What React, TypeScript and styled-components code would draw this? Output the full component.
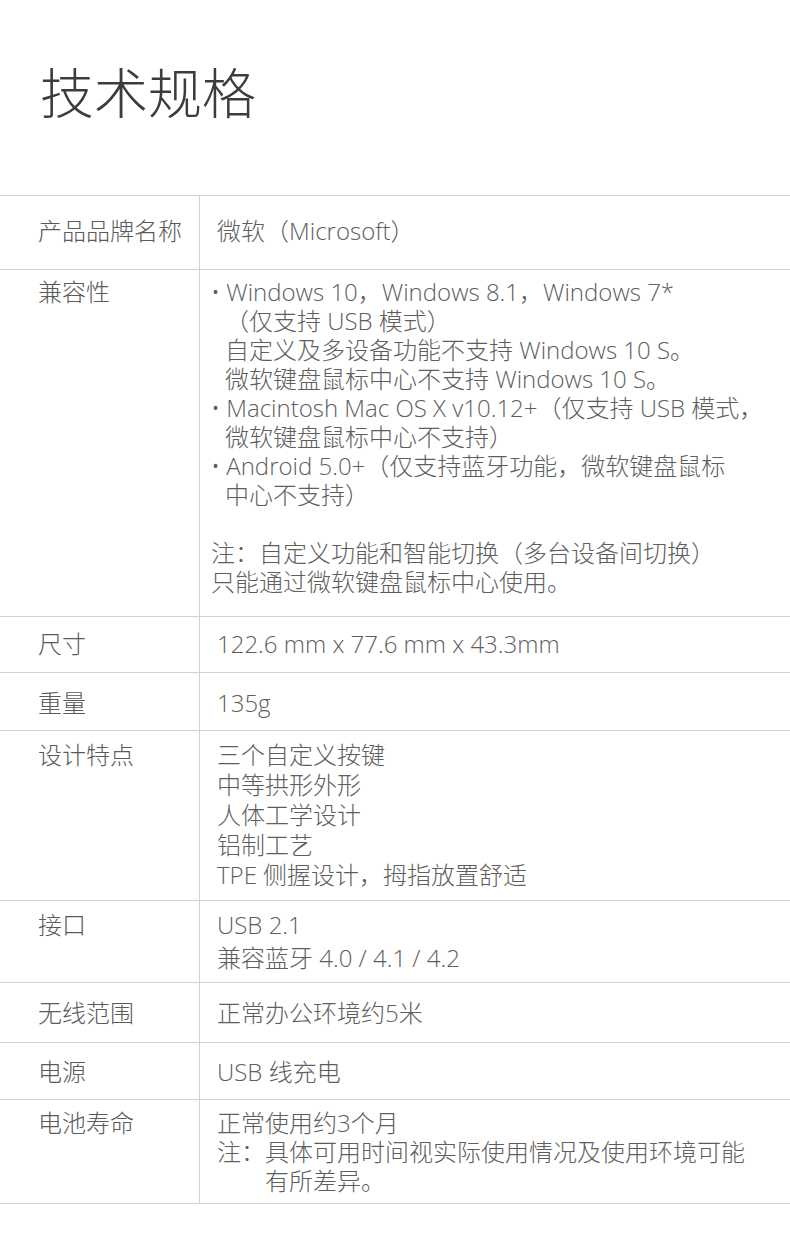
import React, { FC } from 'react';
import styled, { createGlobalStyle } from 'styled-components';

const GlobalStyle = createGlobalStyle`
  html, body {
    margin: 0;
    padding: 0;
    background: #ffffff;
  }
  body {
    font-family: "Open Sans", "Noto Sans CJK SC", sans-serif;
    font-weight: 300;
    color: #5e5e5e;
  }
`

const Page = styled.div`
  width: 790px;
  min-height: 1256px;
  background: #fff;
`

const Header = styled.header`
  height: 195px;
  box-sizing: border-box;
  padding: 58px 0 0 40px;
`

const Title = styled.h1`
  margin: 0;
  font-size: 54px;
  line-height: 70px;
  font-weight: 300;
  color: #3c3c3c;
`

const SpecTable = styled.div`
  border-top: 1px solid #d2d2d2;
  border-bottom: 1px solid #d2d2d2;
`

interface IRowStyled {
  $pt: number;
  $pb: number;
  $lh?: number;
}

const Row = styled.div<IRowStyled>`
  display: grid;
  grid-template-columns: 199px 1fr;
  font-size: 24px;
  line-height: ${p => p.$lh || 29}px;
  & + & {
    border-top: 1px solid #d2d2d2;
  }
  & > * {
    padding-top: ${p => p.$pt}px;
    padding-bottom: ${p => p.$pb}px;
  }
`

const Label = styled.div`
  padding-left: 38px;
  color: #5a5a5a;
`

const Value = styled.div<{ $shift?: number }>`
  border-left: 1px solid #d2d2d2;
  padding-left: ${p => 17 - (p.$shift || 0)}px;
  padding-right: 16px;
`

const Line = styled.div<{ $indent?: number }>`
  white-space: nowrap;
  padding-left: ${p => p.$indent || 0}px;
`

const NoteLine = styled.div`
  box-sizing: border-box;
  width: 530px;
  padding-left: 2em;
  text-indent: -2em;
`

const Gap = styled.div`
  height: 29px;
`

interface ISpec {
  label: string;
  pt: number;
  pb: number;
  lh?: number;
  shift?: number;
  lines: React.ReactNode;
}

const specs: ISpec[] = [
  { label: '产品品牌名称', pt: 20, pb: 24, lines: <Line>微软（Microsoft）</Line> },
  {
    label: '兼容性',
    pt: 7,
    pb: 20,
    shift: 6,
    lines: (
      <>
        <Line>• Windows 10，Windows 8.1，Windows 7*</Line>
        <Line $indent={14}>（仅支持 USB 模式）</Line>
        <Line $indent={14}>自定义及多设备功能不支持 Windows 10 S。</Line>
        <Line $indent={14}>微软键盘鼠标中心不支持 Windows 10 S。</Line>
        <Line>• Macintosh Mac OS X v10.12+（仅支持 USB 模式，</Line>
        <Line $indent={14}>微软键盘鼠标中心不支持）</Line>
        <Line>• Android 5.0+（仅支持蓝牙功能，微软键盘鼠标</Line>
        <Line $indent={14}>中心不支持）</Line>
        <Gap />
        <Line>注：自定义功能和智能切换（多台设备间切换）</Line>
        <Line>只能通过微软键盘鼠标中心使用。</Line>
      </>
    ),
  },
  { label: '尺寸', pt: 12, pb: 14, lines: <Line>122.6 mm x 77.6 mm x 43.3mm</Line> },
  { label: '重量', pt: 15, pb: 13, lines: <Line>135g</Line> },
  {
    label: '设计特点',
    pt: 9,
    pb: 10,
    lh: 30,
    lines: (
      <>
        <Line>三个自定义按键</Line>
        <Line>中等拱形外形</Line>
        <Line>人体工学设计</Line>
        <Line>铝制工艺</Line>
        <Line>TPE 侧握设计，拇指放置舒适</Line>
      </>
    ),
  },
  {
    label: '接口',
    pt: 7,
    pb: 8,
    lh: 33,
    lines: (
      <>
        <Line>USB 2.1</Line>
        <Line>兼容蓝牙 4.0 / 4.1 / 4.2</Line>
      </>
    ),
  },
  { label: '无线范围', pt: 15, pb: 15, lines: <Line>正常办公环境约5米</Line> },
  { label: '电源', pt: 14, pb: 13, lines: <Line>USB 线充电</Line> },
  {
    label: '电池寿命',
    pt: 8,
    pb: 8,
    lines: (
      <>
        <Line>正常使用约3个月</Line>
        <NoteLine>注：具体可用时间视实际使用情况及使用环境可能有所差异。</NoteLine>
      </>
    ),
  },
];

const SpecRow: FC<{ spec: ISpec }> = ({ spec }) => (
  <Row $pt={spec.pt} $pb={spec.pb} $lh={spec.lh}>
    <Label>{spec.label}</Label>
    <Value $shift={spec.shift}>{spec.lines}</Value>
  </Row>
);

export default function App() {
  return (
    <Page>
      <GlobalStyle />
      <Header>
        <Title>技术规格</Title>
      </Header>
      <SpecTable>
        {specs.map(s => (
          <SpecRow key={s.label} spec={s} />
        ))}
      </SpecTable>
    </Page>
  );
}
